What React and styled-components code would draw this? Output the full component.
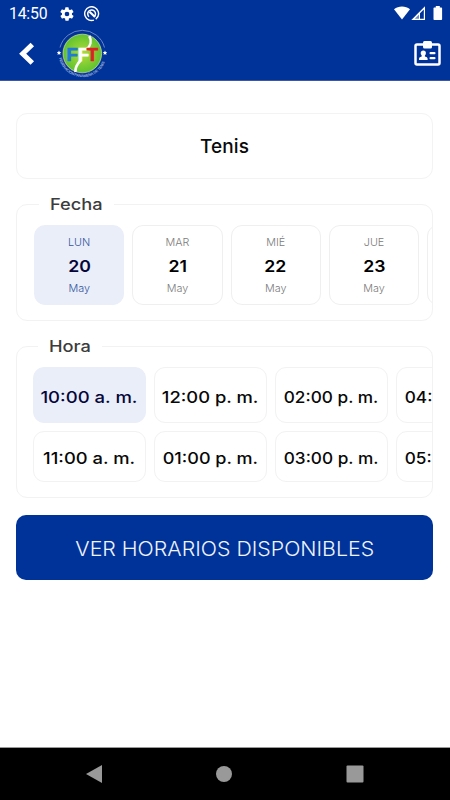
import React, { useState } from "react";
import styled, { createGlobalStyle } from "styled-components";

const GlobalStyle = createGlobalStyle`
  * {
    box-sizing: border-box;
  }
  body {
    margin: 0;
    background: #fff;
    font-family: Inter, "Liberation Sans", sans-serif;
  }
  button {
    font-family: inherit;
  }
`;

const Screen = styled.div`
  width: 450px;
  height: 800px;
  display: flex;
  flex-direction: column;
  overflow: hidden;
`;

const Header = styled.header`
  height: 81px;
  background: #003399;
  border-bottom: 1px solid #40569f;
`;

const StatusBar = styled.div`
  height: 27px;
  padding: 0 7px 0 9px;
  display: flex;
  align-items: center;
  justify-content: space-between;
  color: #fff;
`;

const StatusGroup = styled.div`
  display: flex;
  align-items: center;
  gap: 9px;
  svg {
    display: block;
  }
`;

const Clock = styled.span`
  width: 41px;
  font-family: Roboto, sans-serif;
  font-size: 15.8px;
  line-height: 27px;
  letter-spacing: -0.2px;
`;

const Toolbar = styled.div`
  height: 53px;
  padding: 0 9px 0 18px;
  display: flex;
  align-items: center;
  svg {
    display: block;
  }
`;

const IconButton = styled.button`
  padding: 0;
  border: 0;
  background: none;
  color: #fff;
`;

const LogoBox = styled.div`
  flex: 1;
  padding-left: 20px;
`;

const Main = styled.main`
  flex: 1;
  padding: 32px 17px 0 16px;
`;

const Wide = styled.span`
  display: inline-block;
  white-space: nowrap;
  transform: scaleX(${(props) => props.$scale});
  transform-origin: ${(props) => props.$origin || "center"};
`;

const Title = styled.h1`
  height: 66px;
  margin: 0;
  padding-top: 1px;
  border: 1.5px solid #f3f3f3;
  border-radius: 11px;
  display: flex;
  align-items: center;
  justify-content: center;
  font-size: 19px;
  font-weight: 500;
  letter-spacing: 0.1px;
  color: #0a0a0a;
`;

const Group = styled.fieldset`
  height: ${(props) => props.$height}px;
  min-width: 0;
  margin: 15px 0 0;
  padding: ${(props) => props.$pad};
  border: 1.5px solid #f2f2f2;
  border-radius: 11px;
`;

const Legend = styled.legend`
  width: ${(props) => props.$width}px;
  height: 20px;
  margin-left: 5px;
  padding: 0 11px;
  font-size: 16px;
  font-weight: 500;
  line-height: 21px;
  color: #3c3c3c;
`;

const DateRow = styled.div`
  display: flex;
  gap: 8px;
  overflow: hidden;
`;

const DateCard = styled.button`
  flex: none;
  width: 90.3px;
  height: 80px;
  padding: 1px 0 0;
  border: 1.5px solid ${(props) => (props.$active ? "#e9eef8" : "#efefef")};
  border-radius: 11px;
  display: grid;
  grid-template-rows: 16px 30px 16px;
  align-content: center;
  align-items: center;
  justify-items: center;
  background: ${(props) => (props.$active ? "#e9eef8" : "#fff")};
  color: ${(props) => (props.$active ? "#35549e" : "#7a7a7a")};
`;

const Small = styled.span`
  font-size: 10.8px;
  font-weight: 300;
  line-height: 16px;
`;

const Day = styled.span`
  font-size: 16.5px;
  font-weight: 600;
  line-height: 30px;
  color: ${(props) => (props.$active ? "#06063a" : "#000")};
`;

const TimeGrid = styled.div`
  display: grid;
  grid-auto-flow: column;
  grid-template-rows: 56px 51px;
  grid-auto-columns: 113px;
  gap: 8px;
  overflow: hidden;
`;

const TimeCard = styled.button`
  padding: 3px 0 0;
  border: 1.5px solid ${(props) => (props.$active ? "#e9eef8" : "#f2f2f2")};
  border-radius: 11px;
  background: ${(props) => (props.$active ? "#e9eef8" : "#fff")};
  color: ${(props) => (props.$active ? "#06063a" : "#080808")};
  font-size: 16.4px;
  font-weight: 500;
  white-space: nowrap;
`;

const Submit = styled.button`
  width: 100%;
  height: 65px;
  margin-top: 17px;
  padding: 2px 0 0;
  border: 0;
  border-radius: 10px;
  background: #003399;
  color: #f1f3fb;
  font-size: 19.5px;
  font-weight: 300;
`;

const NavBar = styled.nav`
  height: 53px;
  padding: 0 86px 0 85px;
  border-top: 1px solid #999;
  display: flex;
  align-items: center;
  justify-content: space-between;
  background: #000;
`;

const dates = [
  { name: "LUN", day: 20, month: "May" },
  { name: "MAR", day: 21, month: "May" },
  { name: "MIÉ", day: 22, month: "May" },
  { name: "JUE", day: 23, month: "May" },
  { name: "VIE", day: 24, month: "May" },
];

const times = [
  { label: "10:00 a. m.", scale: 1.13 },
  { label: "11:00 a. m.", scale: 1.12 },
  { label: "12:00 p. m.", scale: 1.12 },
  { label: "01:00 p. m.", scale: 1.1 },
  { label: "02:00 p. m.", scale: 1.05 },
  { label: "03:00 p. m.", scale: 1.05 },
  { label: "04:00 p. m.", scale: 1.05 },
  { label: "05:00 p. m.", scale: 1.05 },
];

function GearIcon() {
  return (
    <svg width="16" height="16" viewBox="0 0 24 24" fill="currentColor">
      <path d="M19.4 13a7.5 7.5 0 0 0 0-2l2.1-1.6c.2-.2.3-.5.1-.7l-2-3.4c-.1-.2-.4-.3-.6-.2l-2.5 1a7.3 7.3 0 0 0-1.7-1l-.4-2.6a.5.5 0 0 0-.5-.5h-4a.5.5 0 0 0-.5.5l-.4 2.6c-.6.3-1.2.6-1.7 1l-2.5-1c-.2-.1-.5 0-.6.2l-2 3.4c-.1.2-.1.5.1.7L4.500 11a7.500 7.500 0 0 0 0 2l-2.100 1.600c-.2.2-.2.5-.1.7l2 3.4c.1.2.4.3.6.2l2.500-1c.5.4 1.100.7 1.700 1l.4 2.600c0 .3.2.5.5.5h4c.3 0 .5-.2.5-.5l.4-2.600c.6-.3 1.200-.6 1.700-1l2.500 1c.2.1.5 0 .6-.2l2-3.400c.1-.2.1-.5-.1-.7zM12 15.500a3.500 3.500 0 1 1 0-7 3.500 3.500 0 0 1 0 7z" />
    </svg>
  );
}

function DataSaverIcon() {
  return (
    <svg width="16" height="16" viewBox="0 0 16 16" fill="none" stroke="currentColor">
      <circle cx="7.600" cy="7.600" r="6.900" strokeWidth="1.400" strokeDasharray="41 2.400" transform="rotate(70 7.600 7.600)" />
      <path d="M5 10.700A3.900 3.900 0 1 1 10.400 10.500" strokeWidth="1.500" />
      <path d="M5.500 5.800 11 11" strokeWidth="2.200" />
    </svg>
  );
}

function SignalIcons() {
  return (
    <svg width="49" height="16" viewBox="0 0 49 16" fill="#fff">
      <path d="M0 3.200C4.500-.5 11.500-.5 16 3.200L8 13.500Z" />
      <path d="M31 .3V14H17.300Z" />
      <path d="M29.800 3.500v9.200h-3.800v-5.400Z" fill="#003399" />
      <path d="M25 8.500v4.200h-4.200Z" fill="#6f8cc6" />
      <path d="M40.300 1.500h1.500V0h4v1.500h1.500q.8 0 .8.800v10.900q0 .8-.8.800h-7q-.8 0-.8-.8V2.300q0-.8.800-.8Z" />
    </svg>
  );
}

function BackIcon() {
  return (
    <svg width="19" height="26" viewBox="0 0 19 26" fill="none" stroke="#fff" strokeWidth="5">
      <path d="M14.300 3.500 4.700 12.800 14.300 22" />
    </svg>
  );
}

function Logo() {
  return (
    <svg width="50" height="50" viewBox="0 0 50 50">
      <defs>
        <radialGradient id="ball">
          <stop offset="0" stopColor="#b2dc3c" />
          <stop offset="1" stopColor="#5fc32e" />
        </radialGradient>
        <path id="ring" d="M2 29A24 24 0 0 0 49 29" />
      </defs>
      <path d="M3 18.500a23 23 0 0 1 44.500 0" fill="none" stroke="#8698cb" strokeWidth=".8" />
      <circle cx="25.300" cy="24.500" r="20.300" fill="#123787" />
      <circle cx="25.300" cy="24.500" r="19.300" fill="url(#ball)" stroke="#dfe9d8" strokeWidth=".6" />
      <path d="M32.300 7c2.800 5 1 10-2.500 13M24 31c-3 3-6 7-5.500 12" fill="none" stroke="#fff" strokeWidth="2.600" />
      <text
        x="9.500"
        y="31.700"
        fontFamily="Liberation Sans, sans-serif"
        fontWeight="700"
        fontSize="18.500"
        strokeWidth=".7"
      >
        <tspan fill="#2179dc" stroke="#2179dc">F</tspan>
        <tspan fill="#fff" stroke="#fff">F</tspan>
        <tspan dx="-2.500" fill="#dc2028" stroke="#dc2028">T</tspan>
      </text>
      <text fontFamily="Liberation Sans, sans-serif" fontSize="3.800" fontWeight="700" fill="#9eafd9">
        <textPath href="#ring" textLength="61">FEDERACIÓN PANAMEÑA DE TENIS</textPath>
      </text>
      <path
        d="m2 21.500.7 1.500 1.600.2-1.200 1.100.3 1.600-1.400-.8-1.400.8.3-1.600-1.200-1.100 1.600-.2ZM48 21.500l.7 1.500 1.600.2-1.200 1.100.3 1.600-1.400-.8-1.400.8.3-1.600-1.200-1.100 1.600-.2Z"
        fill="#fff"
      />
    </svg>
  );
}

function BadgeIcon() {
  return (
    <svg width="27" height="26" viewBox="0 0 27 26" fill="#fff">
      <rect x="1.500" y="3.500" width="24" height="20" rx="1.500" fill="none" stroke="#fff" strokeWidth="2.500" />
      <rect x="9" y="0" width="9" height="7.500" rx="1.500" />
      <circle cx="9.300" cy="12" r="2.600" />
      <path d="M5 19v-1.500q0-1.500 2.700-2v-2h3.200v2q2.700.5 2.700 2v1.500Z" />
      <rect x="15.500" y="11" width="6" height="2.200" rx="1" />
      <rect x="15.500" y="16" width="6" height="2.200" rx="1" />
    </svg>
  );
}

function App() {
  const [date, setDate] = useState(0);
  const [time, setTime] = useState(0);

  return (
    <Screen>
      <GlobalStyle />
      <Header>
        <StatusBar>
          <StatusGroup>
            <Clock>14:50</Clock>
            <GearIcon />
            <DataSaverIcon />
          </StatusGroup>
          <SignalIcons />
        </StatusBar>
        <Toolbar>
          <IconButton aria-label="Volver">
            <BackIcon />
          </IconButton>
          <LogoBox>
            <Logo />
          </LogoBox>
          <IconButton aria-label="Carnet">
            <BadgeIcon />
          </IconButton>
        </Toolbar>
      </Header>
      <Main>
        <Title>Tenis</Title>
        <Group $height={127} $pad="11px 0 0 17px">
          <Legend $width={75}>
            <Wide $scale={1.14} $origin="left">Fecha</Wide>
          </Legend>
          <DateRow>
            {dates.map((item, i) => (
              <DateCard key={item.day} $active={i === date} onClick={() => setDate(i)}>
                <Small>{item.name}</Small>
                <Day $active={i === date}>
                  <Wide $scale={1.07}>{item.day}</Wide>
                </Day>
                <Small>{item.month}</Small>
              </DateCard>
            ))}
          </DateRow>
        </Group>
        <Group $height={162} $pad="11px 0 0 15.5px">
          <Legend $width={64}>
            <Wide $scale={1.14} $origin="left">Hora</Wide>
          </Legend>
          <TimeGrid>
            {times.map((item, i) => (
              <TimeCard key={item.label} $active={i === time} onClick={() => setTime(i)}>
                <Wide $scale={item.scale}>{item.label}</Wide>
              </TimeCard>
            ))}
          </TimeGrid>
        </Group>
        <Submit>
          <Wide $scale={1.093}>VER HORARIOS DISPONIBLES</Wide>
        </Submit>
      </Main>
      <NavBar>
        <svg width="17" height="18" fill="#999">
          <path d="M1 9 17 0v18Z" />
        </svg>
        <svg width="16" height="16" fill="#999">
          <circle cx="8" cy="8" r="8" />
        </svg>
        <svg width="18" height="18" fill="#999">
          <rect x=".5" y=".5" width="17" height="17" rx="1" />
        </svg>
      </NavBar>
    </Screen>
  );
}

export default App;
